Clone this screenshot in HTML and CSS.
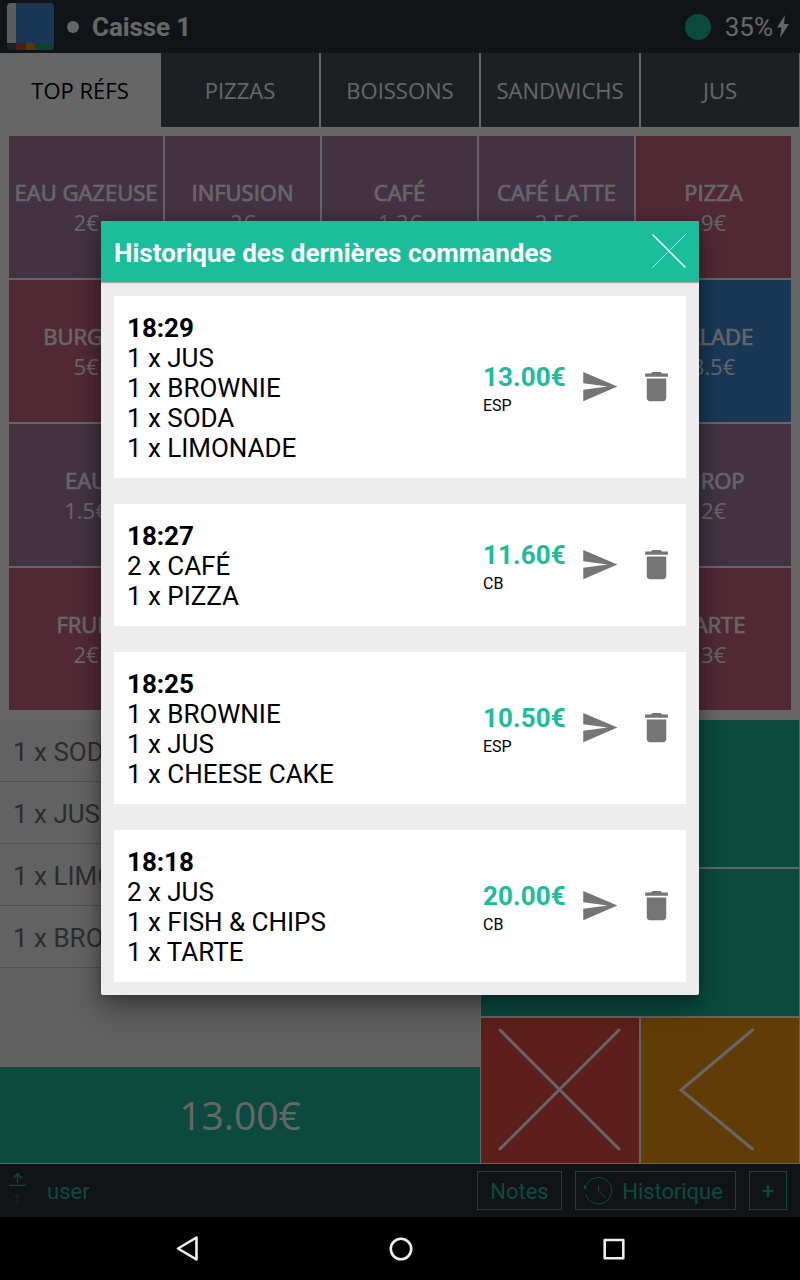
FILE: index.html
```html
<!DOCTYPE html>
<html lang="fr">
<head>
<meta charset="utf-8">
<title>Caisse 1</title>
<link rel="stylesheet" href="styles.css">
</head>
<body>
<svg class="defs" width="0" height="0">
  <symbol id="send" viewBox="0 0 24 24"><path d="M2.01 21L23 12 2.01 3 2 10l15 2-15 2z"/></symbol>
  <symbol id="trash" viewBox="0 0 24 24"><path d="M6 19c0 1.1.9 2 2 2h8c1.1 0 2-.9 2-2V7H6v12zM19 4h-3.5l-1-1h-5l-1 1H5v2h14V4z"/></symbol>
</svg>
<div class="app">
  <header class="topbar">
    <div class="logo"><i class="l-white"></i><i class="l-blue"></i><i class="l-strip"></i></div>
    <span class="dot"></span>
    <span class="register">Caisse 1</span>
    <span class="status"></span>
    <span class="battery">35%</span>
    <svg class="bolt" width="12" height="23" viewBox="0 0 12 23"><path d="M8 0L0 12.500h4.500L3 23 12 9H7z"/></svg>
  </header>
  <nav class="tabs">
    <span class="tab active">TOP RÉFS</span><span class="tab">PIZZAS</span><span class="tab">BOISSONS</span><span class="tab">SANDWICHS</span><span class="tab">JUS</span>
  </nav>
  <section class="grid">
    <div class="cell purple"><b>EAU GAZEUSE</b><span>2€</span></div>
    <div class="cell purple"><b>INFUSION</b><span>2€</span></div>
    <div class="cell purple"><b>CAFÉ</b><span>1.3€</span></div>
    <div class="cell purple"><b>CAFÉ LATTE</b><span>2.5€</span></div>
    <div class="cell pink"><b>PIZZA</b><span>9€</span></div>
    <div class="cell pink"><b>BURGER</b><span>5€</span></div>
    <div class="cell pink"></div><div class="cell pink"></div><div class="cell pink"></div>
    <div class="cell blue"><b>SALADE</b><span>3.5€</span></div>
    <div class="cell purple"><b>EAU</b><span>1.5€</span></div>
    <div class="cell purple"></div><div class="cell purple"></div><div class="cell purple"></div>
    <div class="cell purple"><b>SIROP</b><span>2€</span></div>
    <div class="cell pink"><b>FRUIT</b><span>2€</span></div>
    <div class="cell pink"></div><div class="cell pink"></div><div class="cell pink"></div>
    <div class="cell pink"><b>TARTE</b><span>3€</span></div>
  </section>
  <section class="bottom">
    <div class="ticket">
      <div class="line">1 x SODA</div>
      <div class="line">1 x JUS</div>
      <div class="line">1 x LIMO</div>
      <div class="line">1 x BRO</div>
      <div class="total">13.00€</div>
    </div>
    <div class="pad">
      <div class="key wide"></div>
      <div class="key wide"></div>
      <div class="key red"><svg width="158" height="145" viewBox="0 0 158 145"><path d="M19 12L138 131M138 12L19 131"/></svg></div>
      <div class="key orange"><svg width="158" height="145" viewBox="0 0 158 145"><path d="M111.500 12L40 72l71.500 59"/></svg></div>
    </div>
  </section>
  <footer class="footer">
    <div class="queue"><svg width="18" height="15" viewBox="0 0 18 15"><path d="M8.500 12V3M4.500 7L8.500 2.500 12.500 7M0 14.300h17"/></svg><span>1</span></div>
    <span class="user">user</span>
    <span class="btn notes">Notes</span>
    <span class="btn history"><svg width="29" height="29" viewBox="0 0 29 29"><path d="M1.500 11.500A13.300 13.300 0 1 1 1.500 18M14.500 9v6l6.500 6"/><path class="tip" d="M0 8v5h3z"/></svg>Historique</span>
    <span class="btn plus">+</span>
  </footer>
</div>
<div class="navbar">
  <svg width="800" height="63" viewBox="0 0 800 63"><path d="M196.500 20.500v22L178 31.500z"/><circle cx="401" cy="32" r="10.200"/><rect x="604.700" y="23" width="18.600" height="18.200"/></svg>
</div>
<div class="backdrop">
  <div class="modal">
    <div class="head"><h1>Historique des dernières commandes</h1><svg width="34" height="34" viewBox="0 0 34 34"><path d="M.5.5l33 33"/><path class="thin" d="M33.500.5l-33 33"/></svg></div>
    <div class="orders">
      <article class="order">
        <div class="items"><b>18:29</b><p>1 x JUS</p><p>1 x BROWNIE</p><p>1 x SODA</p><p>1 x LIMONADE</p></div>
        <div class="pay"><strong>13.00€</strong><small>ESP</small></div>
        <svg class="icon"><use href="#send"/></svg><svg class="icon"><use href="#trash"/></svg>
      </article>
      <article class="order">
        <div class="items"><b>18:27</b><p>2 x CAFÉ</p><p>1 x PIZZA</p></div>
        <div class="pay"><strong>11.60€</strong><small>CB</small></div>
        <svg class="icon"><use href="#send"/></svg><svg class="icon"><use href="#trash"/></svg>
      </article>
      <article class="order">
        <div class="items"><b>18:25</b><p>1 x BROWNIE</p><p>1 x JUS</p><p>1 x CHEESE CAKE</p></div>
        <div class="pay"><strong>10.50€</strong><small>ESP</small></div>
        <svg class="icon"><use href="#send"/></svg><svg class="icon"><use href="#trash"/></svg>
      </article>
      <article class="order">
        <div class="items"><b>18:18</b><p>2 x JUS</p><p>1 x FISH &amp; CHIPS</p><p>1 x TARTE</p></div>
        <div class="pay"><strong>20.00€</strong><small>CB</small></div>
        <svg class="icon"><use href="#send"/></svg><svg class="icon"><use href="#trash"/></svg>
      </article>
    </div>
  </div>
</div>
</body>
</html>
```
FILE: styles.css
```css
* { box-sizing: border-box; margin: 0; padding: 0; }
body { width: 800px; height: 1280px; overflow: hidden; background: #000; font-family: Roboto, sans-serif; }
svg { display: block; }
.defs { position: absolute; }
.app { height: 1217px; background: #fff; display: flex; flex-direction: column; }

.topbar { height: 53px; background: #2a343a; display: flex; align-items: center; padding: 0 11px 0 7px; color: #fff; font-size: 26px; }
.logo { width: 47px; height: 47px; border-radius: 4px; overflow: hidden; display: grid; grid-template: 40px 7px / 9px 38px; }
.l-white { background: #e6e6e6; }
.l-blue { background: #3d8cd4; }
.l-strip { grid-column: 1 / 3; background: linear-gradient(90deg, #46545c 9px, #d8453a 9px 19px, #e08a1c 19px 28px, #1ca77c 28px); }
.dot { width: 12px; height: 12px; border-radius: 50%; background: #fff; margin: 0 13px; }
.register { font-weight: 700; letter-spacing: -.1px; }
.status { width: 26px; height: 26px; border-radius: 50%; background: #1cb998; margin-left: auto; }
.battery { margin: 0 4px 0 14px; }
.bolt { fill: #fff; }

.tabs { display: flex; height: 74px; }
.tab { width: 160px; border: solid #fff; border-width: 0 1px; background: #465056; color: #fff; font: 22px/74px "Open Sans", sans-serif; text-align: center; white-space: nowrap; }
.tab.active { background: #fff; color: #000; }

.grid { margin: 9px 9px 10px; display: grid; grid-template-columns: 154px repeat(4, 155px); grid-auto-rows: 142px; gap: 2px; }
.cell { display: flex; flex-direction: column; align-items: center; justify-content: center; color: #fff; font: 22px/30px "Open Sans", sans-serif; white-space: nowrap; }
.cell b { font-weight: 400; -webkit-text-stroke: .7px #fff; }
.purple { background: #a57daa; }
.pink { background: #c86684; }
.blue { background: #3d8cd4; }

.bottom { display: flex; height: 444px; border-bottom: 1px solid #fff; }
.ticket { width: 480px; background: #f0f0f0; display: flex; flex-direction: column; color: #707070; }
.line { height: 62px; padding-left: 13px; font-size: 26px; line-height: 64px; border-bottom: 1px solid #c8c8c8; background: #f6f6f6; }
.total { margin-top: auto; height: 96px; background: #1cb998; color: #fff; text-align: center; font: 39px/96px "Open Sans", sans-serif; }
.pad { flex: 1; padding: 0 1px; display: grid; grid-template-columns: 1fr 1fr; grid-template-rows: 147px 147px 145px; gap: 2px; }
.key { background: #1cb998; }
.wide { grid-column: 1 / 3; }
.key svg { fill: none; stroke: #fff; stroke-width: 3; stroke-linecap: round; }
.red { background: #e84e42; }
.orange { background: #f09910; }

.footer { height: 53px; background: #2a3339; display: flex; align-items: center; color: #1cb998; font-size: 22px; padding: 0 13px 0 9px; }
.queue { width: 18px; text-align: center; font-size: 16px; line-height: 20px; color: #425058; }
.queue svg { fill: none; stroke: #1cb998; stroke-width: 1.300; }
.queue span { display: block; padding: 5px 2px 0 0; }
.user { margin: 2px auto 0 20px; }
.btn { height: 39px; border: 1px solid #1cb998; display: flex; align-items: center; justify-content: center; padding-top: 2px; margin-left: 13px; }
.notes { width: 85px; }
.history { width: 161px; gap: 9px; padding-right: 4px; letter-spacing: -.05px; }
.history svg { fill: none; stroke: #1cb998; margin-top: -2px; }
.history .tip { fill: #1cb998; stroke: none; }
.plus { width: 38px; -webkit-text-stroke: .2px #1cb998; }

.navbar { position: relative; z-index: 2; height: 63px; background: #000; }
.navbar svg { fill: none; stroke: #eee; stroke-width: 2.600; stroke-linejoin: round; }

.backdrop { position: absolute; top: 0; left: 0; width: 800px; height: 1217px; background: rgba(0, 0, 0, .6); display: flex; align-items: center; justify-content: center; overflow: hidden; }
.modal { width: 598px; height: 774px; margin-bottom: 1px; background: #ededed; border-radius: 2px; overflow: hidden; box-shadow: 0 14px 26px rgba(0, 0, 0, .32), 0 2px 14px rgba(0, 0, 0, .25); }
.head { height: 61px; background: #1cbd9b; color: #fff; display: flex; align-items: center; justify-content: space-between; padding: 0 13px; box-shadow: 0 1px 1px #aaa; }
.head h1 { font-size: 26px; line-height: 30px; padding-top: 2px; letter-spacing: .03px; }
.head svg { stroke: #fff; stroke-width: 1.500; margin-top: -1px; }
.head .thin { stroke-width: 1; }
.orders { padding: 14px 13px 13px; display: flex; flex-direction: column; gap: 26px; }
.order { background: #fff; padding: 17px 10px 15px 13px; display: flex; align-items: center; font-size: 26px; line-height: 30px; color: #000; }
.items { flex: 1; letter-spacing: -.03px; }
.items b { display: block; }
.pay { width: 97px; padding-top: 6px; }
.pay strong { display: block; color: #1cbd9b; letter-spacing: .1px; }
.pay small { display: block; font-size: 16px; line-height: 28px; }
.icon { width: 39px; height: 39px; fill: #757575; margin-top: -3px; }
.icon + .icon { margin-left: 18px; }
```
